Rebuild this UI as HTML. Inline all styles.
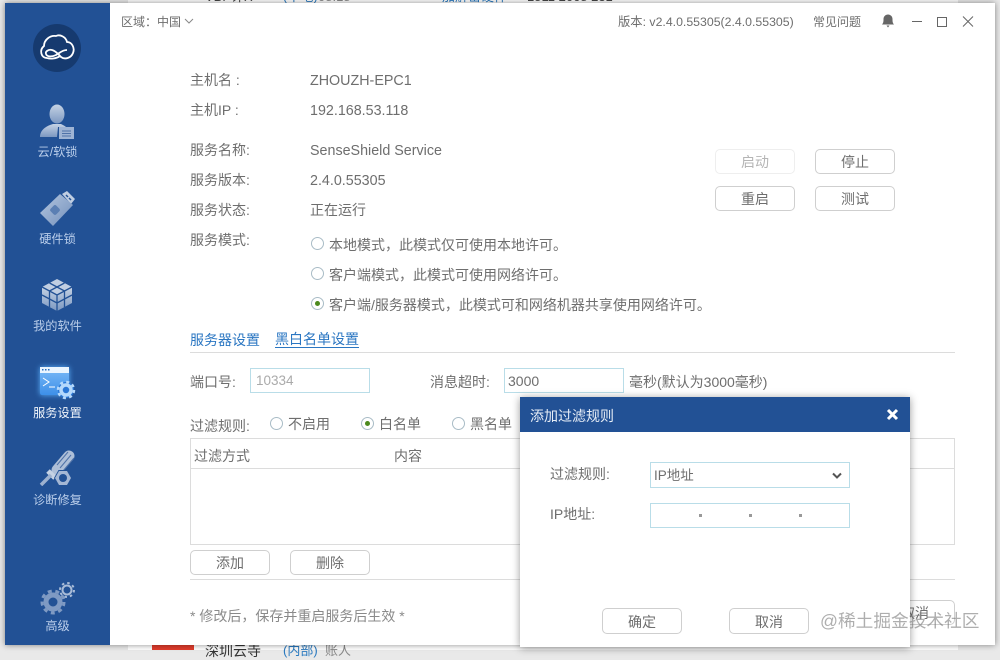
<!DOCTYPE html>
<html><head><meta charset="utf-8">
<style>
html,body{margin:0;padding:0;width:1000px;height:650px;overflow:hidden;background:#e9e9e9;font-family:"Liberation Sans","Noto Sans CJK SC",sans-serif;}
.t{position:absolute;white-space:nowrap;font-size:14px;line-height:18px;color:#6e6e6e;}
.b{position:absolute;width:78px;height:23px;border:1px solid #cfcfcf;border-radius:5px;background:#fff;text-align:center;font-size:14px;line-height:25px;color:#6e6e6e;}
.r{position:absolute;width:11px;height:11px;border:1px solid #a9bcc6;border-radius:50%;background:#fff;}
.r.on::after{content:"";position:absolute;left:3px;top:3px;width:5px;height:5px;border-radius:50%;background:#4d8a1e;}
.i{position:absolute;border:1px solid #b9dde8;background:#fff;box-sizing:border-box;}
.l{position:absolute;background:#dcdcdc;height:1px;}
.n{position:absolute;left:5px;width:105px;text-align:center;font-size:12.200px;line-height:16px;color:#b9cdea;}
svg{position:absolute;}
</style></head><body>
<!-- background page -->
<div style="position:absolute;left:128px;top:0;width:830px;height:650px;background:#fff"></div>
<div class="t" style="left:205px;top:-12px;color:#444;font-size:13px">VBP计X</div>
<div class="t" style="left:283px;top:-12px;color:#2a7ac0;font-size:13px">(本地)</div>
<div class="t" style="left:318px;top:-12px;color:#888;font-size:13px">08:18</div>
<div class="t" style="left:442px;top:-12px;color:#2a7ac0;font-size:13px">加解密硬件</div>
<div class="t" style="left:527px;top:-12px;color:#444;font-size:13px">1511 2668 231</div>
<div style="position:absolute;left:152px;top:645px;width:42px;height:5px;background:#e23c2c"></div>
<div class="t" style="left:205px;top:642px;color:#333;font-size:14px">深圳云寺</div>
<div class="t" style="left:283px;top:642px;color:#2a7ac0;font-size:13px">(内部)</div>
<div class="t" style="left:325px;top:642px;color:#888;font-size:13px">账人</div>

<!-- window -->
<div style="position:absolute;left:5px;top:3px;width:990px;height:642px;background:#fff;box-shadow:0 0 6px rgba(0,0,0,.45)"></div>
<div style="position:absolute;left:5px;top:3px;width:105px;height:642px;background:#225195"></div>

<!-- logo -->
<div style="position:absolute;left:33px;top:24px;width:48px;height:48px;border-radius:50%;background:#163a6f"></div>
<svg style="left:0;top:0" width="110" height="80" viewBox="0 0 110 80" fill="none" stroke="#fff" stroke-width="1.800"><path d="M47 58C41 58 39 50 44 46C44 40 50 35 56 36C60 34 66 37 67 42C72 42 75 48 73 53C71 58 65 60 61 57C58 54 56 51 52 50C48 49 45 52 46 54C47 57 52 57 56 55C60 53 62 50 67 50"/><path d="M47 58C50 59 56 59 60 56"/></svg>

<!-- nav icons -->
<svg style="left:38px;top:104px" width="40" height="36" viewBox="0 0 40 36"><defs><linearGradient id="g" x1="0" y1="0" x2="0" y2="1"><stop offset="0" stop-color="#c5d2e4"/><stop offset="1" stop-color="#7c98c1"/></linearGradient><linearGradient id="h" x1="0" y1="0" x2="1" y2="1"><stop offset="0" stop-color="#b4c6df"/><stop offset="1" stop-color="#7390bc"/></linearGradient></defs>
<ellipse cx="19" cy="10" rx="7.500" ry="9.500" fill="url(#g)"/><path d="M2 33C2 26 8 22 15 20L23 20C25 21 27 22 28 23L20 23L19 33Z" fill="url(#g)"/><rect x="21" y="23" width="15" height="12" fill="#9fb4d4"/><path d="M24 27H33M24 29.500H33M24 32H33" stroke="#4f72a8" stroke-width="1"/></svg>
<div class="n" style="top:144px">云/软锁</div>

<svg style="left:38px;top:190px" width="38" height="38" viewBox="0 0 38 38"><path d="M24 4L29 1L37 9L33 14Z" fill="#c0cee2"/><path d="M28 5L30 7M31 8L33 10" stroke="#225195" stroke-width="1.500"/><path d="M2 23L22 4L35 15L15 36Z" fill="url(#h)"/><rect x="13" y="16" width="8" height="8" rx="2" transform="rotate(45 17 20)" fill="#5b7fb3"/></svg>
<div class="n" style="top:231px">硬件锁</div>

<svg style="left:41px;top:278px" width="32" height="34" viewBox="0 0 32 34"><path d="M16 1L31 9L16 17L1 9Z" fill="#c0cee2"/><path d="M1 9L16 17V33L1 25Z" fill="url(#g)"/><path d="M31 9L16 17V33L31 25Z" fill="url(#g)"/><g stroke="#225195" stroke-width="1.300" fill="none"><path d="M8.500 5L23.500 13M23.500 5L8.500 13M1 9L16 17L31 9M16 17V33M8.500 13V29M23.500 13V29M1 17L16 25L31 17"/></g></svg>
<div class="n" style="top:318px">我的软件</div>

<div style="position:absolute;left:40px;top:367px;width:29px;height:28px;border-radius:2px;background:linear-gradient(#7dbcf8,#3d8fe8);box-shadow:0 0 6px #5db2ff"></div>
<div style="position:absolute;left:40px;top:367px;width:29px;height:6px;background:#eaf5ff"></div>
<svg style="left:40px;top:367px" width="36" height="36" viewBox="0 0 36 36" fill="none"><path d="M2 2.800H3.500M5 2.800H6.500M8 2.800H9.500" stroke="#2a6fc0" stroke-width="1.500"/><path d="M3 11L9 15L3 19M9 20H15" stroke="#fff" stroke-width="1"/><circle cx="26" cy="23" r="8" fill="#2a77d6"/><circle cx="26" cy="23" r="5" stroke="#b5d9fc" stroke-width="3.500"/><circle cx="26" cy="23" r="8" stroke="#b5d9fc" stroke-width="2.500" stroke-dasharray="3 3.280"/></svg>
<div class="n" style="top:405px;color:#f2f6fb">服务设置</div>

<svg style="left:38px;top:450px" width="38" height="36" viewBox="0 0 38 36" fill="none"><path d="M31 6L19 20" stroke="#aebfd8" stroke-width="11" stroke-linecap="round"/><path d="M30 2L19 15M33 5L22 18M36 8L25 21" stroke="#4f72a8" stroke-width="1"/><path d="M10 21L17 28" stroke="#c5d2e4" stroke-width="5"/><path d="M13 25L3 35" stroke="#9db1cf" stroke-width="3.500"/><polygon points="34,28 29.500,36 20.500,36 16,28 20.500,20 29.500,20" fill="#225195"/><polygon points="33,28 29,35 21,35 17,28 21,21 29,21" fill="#a4b7d4"/><circle cx="25" cy="28" r="4" fill="#225195"/></svg>
<div class="n" style="top:492px">诊断修复</div>

<svg style="left:38px;top:580px" width="38" height="36" viewBox="0 0 38 36" fill="none"><circle cx="15" cy="22" r="7" stroke="#7f9ac3" stroke-width="5"/><circle cx="15" cy="22" r="11" stroke="#7f9ac3" stroke-width="3" stroke-dasharray="4 3.700"/><circle cx="29" cy="10" r="4.500" stroke="#a9bcd8" stroke-width="2"/><circle cx="29" cy="10" r="7" stroke="#a9bcd8" stroke-width="2" stroke-dasharray="2.500 3"/></svg>
<div class="n" style="top:618px">高级</div>

<!-- title bar -->
<div class="t" style="left:121px;top:13px;font-size:12px">区域：中国</div>
<svg style="left:184px;top:18px" width="10" height="7" viewBox="0 0 10 7" fill="none" stroke="#888"><path d="M1 1L5 5L9 1"/></svg>
<div class="t" style="left:618px;top:13px;font-size:12.300px">版本: v2.4.0.55305(2.4.0.55305)</div>
<div class="t" style="left:813px;top:13px;font-size:12px">常见问题</div>
<svg style="left:881px;top:13px" width="14" height="15" viewBox="0 0 14 15"><path d="M1 11.500C2.500 10 2.500 8 2.500 6C2.500 3.500 4.500 1.500 7 1.500C9.500 1.500 11.500 3.500 11.500 6C11.500 8 11.500 10 13 11.500Z" fill="#666"/><path d="M5.500 12.500H8.500L7 14.500Z" fill="#666"/></svg>
<svg style="left:910px;top:14px" width="64" height="14" viewBox="0 0 64 14" fill="none" stroke="#666"><path d="M2 7.500H12"/><rect x="27.500" y="3.500" width="9" height="9"/><path d="M53 2.500L63 12.500M63 2.500L53 12.500"/></svg>

<!-- host info -->
<div class="t" style="left:190px;top:71px">主机名 :</div>
<div class="t" style="left:310px;top:72px;font-size:14.300px">ZHOUZH-EPC1</div>
<div class="t" style="left:190px;top:101px">主机IP :</div>
<div class="t" style="left:310px;top:102px;font-size:14.300px">192.168.53.118</div>
<div class="t" style="left:190px;top:141px">服务名称:</div>
<div class="t" style="left:310px;top:142px;font-size:14.300px">SenseShield Service</div>
<div class="t" style="left:190px;top:171px">服务版本:</div>
<div class="t" style="left:310px;top:172px;font-size:14.300px">2.4.0.55305</div>
<div class="t" style="left:190px;top:201px">服务状态:</div>
<div class="t" style="left:310px;top:201px">正在运行</div>
<div class="t" style="left:190px;top:231px">服务模式:</div>

<div class="r" style="left:311px;top:237px"></div>
<div class="t" style="left:329px;top:236px">本地模式，此模式仅可使用本地许可。</div>
<div class="r" style="left:311px;top:267px"></div>
<div class="t" style="left:329px;top:266px">客户端模式，此模式可使用网络许可。</div>
<div class="r on" style="left:311px;top:297px"></div>
<div class="t" style="left:329px;top:296px">客户端/服务器模式，此模式可和网络机器共享使用网络许可。</div>

<div class="b" style="left:715px;top:149px;border-color:#eee;color:#b5b5b5">启动</div>
<div class="b" style="left:815px;top:149px">停止</div>
<div class="b" style="left:715px;top:186px">重启</div>
<div class="b" style="left:815px;top:186px">测试</div>

<div class="t" style="left:190px;top:331px;color:#2a76c2">服务器设置</div>
<div class="t" style="left:275px;top:331px;color:#2a76c2;border-bottom:1px solid #2a76c2;line-height:16px">黑白名单设置</div>
<div class="l" style="left:190px;top:352px;width:765px"></div>

<div class="t" style="left:190px;top:373px">端口号:</div>
<div class="i t" style="left:250px;top:368px;width:120px;height:25px;line-height:24px;padding-left:5px;color:#aaa;font-size:13.500px">10334</div>
<div class="t" style="left:430px;top:373px">消息超时:</div>
<div class="i t" style="left:504px;top:368px;width:120px;height:25px;line-height:24px;padding-left:3px">3000</div>
<div class="t" style="left:629px;top:373px">毫秒(默认为3000毫秒)</div>

<div class="t" style="left:190px;top:417px">过滤规则:</div>
<div class="r" style="left:270px;top:417px"></div>
<div class="t" style="left:288px;top:415px">不启用</div>
<div class="r on" style="left:361px;top:417px"></div>
<div class="t" style="left:379px;top:415px">白名单</div>
<div class="r" style="left:452px;top:417px"></div>
<div class="t" style="left:470px;top:415px">黑名单</div>

<div style="position:absolute;left:190px;top:438px;width:763px;height:105px;border:1px solid #dcdcdc"></div>
<div class="l" style="left:191px;top:468px;width:763px"></div>
<div class="t" style="left:194px;top:447px">过滤方式</div>
<div class="t" style="left:394px;top:447px">内容</div>

<div class="b" style="left:190px;top:550px">添加</div>
<div class="b" style="left:290px;top:550px">删除</div>
<div class="l" style="left:190px;top:579px;width:765px"></div>
<div class="t" style="left:190px;top:607px;color:#8a8a8a">* 修改后，保存并重启服务后生效 *</div>
<div class="b" style="left:875px;top:600px">取消</div>

<!-- dialog -->
<div style="position:absolute;left:520px;top:397px;width:390px;height:250px;background:#fff;box-shadow:0 1px 8px rgba(0,0,0,.4)"></div>
<div style="position:absolute;left:520px;top:397px;width:390px;height:35px;background:#225195"></div>
<div class="t" style="left:530px;top:407px;color:#e6edf6">添加过滤规则</div>
<svg style="left:886px;top:408px" width="13" height="13" viewBox="0 0 13 13" fill="none" stroke="#fff" stroke-width="3"><path d="M2 2L11 11M11 2L2 11"/></svg>
<div class="t" style="left:550px;top:465px">过滤规则:</div>
<div class="i t" style="left:650px;top:462px;width:200px;height:26px;line-height:26px;padding-left:3px;font-size:13.500px">IP地址</div>
<svg style="left:832px;top:472px" width="10" height="8" viewBox="0 0 10 8" fill="none" stroke="#555" stroke-width="2"><path d="M1 1.500L5 5.500L9 1.500"/></svg>
<div class="t" style="left:550px;top:505px">IP地址:</div>
<div class="i" style="left:650px;top:503px;width:200px;height:25px"></div>
<div style="position:absolute;left:699px;top:514px;width:3px;height:3px;background:#999"></div>
<div style="position:absolute;left:749px;top:514px;width:3px;height:3px;background:#999"></div>
<div style="position:absolute;left:799px;top:514px;width:3px;height:3px;background:#999"></div>
<div class="b" style="left:602px;top:608px;height:24px;line-height:27px">确定</div>
<div class="b" style="left:729px;top:608px;height:24px;line-height:27px">取消</div>

<!-- watermark -->
<div class="t" style="left:820px;top:611px;font-size:17.700px;line-height:20px;color:rgba(120,120,120,.6)">@稀土掘金技术社区</div>
</body></html>
